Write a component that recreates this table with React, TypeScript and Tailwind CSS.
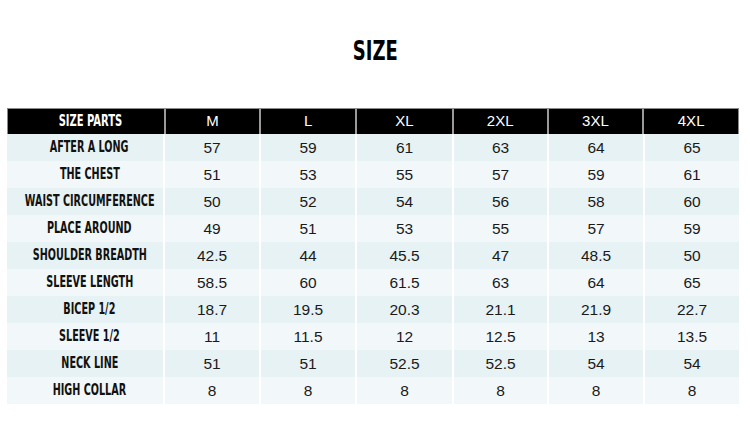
const sizes = ['M', 'L', 'XL', '2XL', '3XL', '4XL'];

const rows: [string, string[]][] = [
  ['AFTER A LONG', ['57', '59', '61', '63', '64', '65']],
  ['THE CHEST', ['51', '53', '55', '57', '59', '61']],
  ['WAIST CIRCUMFERENCE', ['50', '52', '54', '56', '58', '60']],
  ['PLACE AROUND', ['49', '51', '53', '55', '57', '59']],
  ['SHOULDER BREADTH', ['42.5', '44', '45.5', '47', '48.5', '50']],
  ['SLEEVE LENGTH', ['58.5', '60', '61.5', '63', '64', '65']],
  ['BICEP 1/2', ['18.7', '19.5', '20.3', '21.1', '21.9', '22.7']],
  ['SLEEVE 1/2', ['11', '11.5', '12', '12.5', '13', '13.5']],
  ['NECK LINE', ['51', '51', '52.5', '52.5', '54', '54']],
  ['HIGH COLLAR', ['8', '8', '8', '8', '8', '8']],
];

const colWidths = ['w-[156px]', 'w-[96px]', 'w-[96px]', 'w-[97px]', 'w-[95px]', 'w-[96px]', 'w-[96px]'];

// condensed heavy label face: DejaVu condensed squeezed a bit more
const narrow = "font-['DejaVu_Sans',sans-serif] font-bold font-stretch-condensed whitespace-nowrap inline-block";
const plain = "font-['Liberation_Sans',Arial,sans-serif]";

export default function App() {
  return (
    <div className="w-[750px] h-[443px] bg-white overflow-hidden">
      <div className="pt-[36px] h-[108px] flex justify-center">
        <span className={`${narrow} scale-x-[0.77] text-[26px] leading-[30px] text-black`}>SIZE</span>
      </div>

      <div className="ml-[7px] w-[732px]">
        {/* header */}
        <div className="flex h-[26px] bg-black border-t border-l border-r border-[#8a8a8a]">
          {['SIZE PARTS', ...sizes].map((h, i) => (
            <div
              key={h}
              className={`${colWidths[i]} flex items-center justify-center text-white ${
                i > 0 ? 'border-l-2 border-[#9a9a9a]' : 'pl-[9px]'
              }`}
            >
              {i === 0 ? (
                <span className={`${narrow} scale-x-[0.715] text-[15.5px]`}>{h}</span>
              ) : (
                <span className={`${plain} text-[15px]`}>{h}</span>
              )}
            </div>
          ))}
        </div>

        {/* body */}
        {rows.map(([label, vals], r) => (
          <div key={label} className={`flex h-[27px] ${r % 2 === 0 ? 'bg-[#e7f2f4]' : 'bg-[#f2f8fa]'}`}>
            <div className={`${colWidths[0]} flex items-center justify-center pl-[9px] text-[#111]`}>
              <span className={`${narrow} scale-x-[0.715] text-[15px]`}>{label}</span>
            </div>
            {vals.map((v, i) => (
              <div
                key={i}
                className={`${colWidths[i + 1]} flex items-center justify-center border-l-2 border-white ${plain} text-[15.5px] text-[#1a1a1a]`}
              >
                {v}
              </div>
            ))}
          </div>
        ))}
      </div>
    </div>
  );
}
